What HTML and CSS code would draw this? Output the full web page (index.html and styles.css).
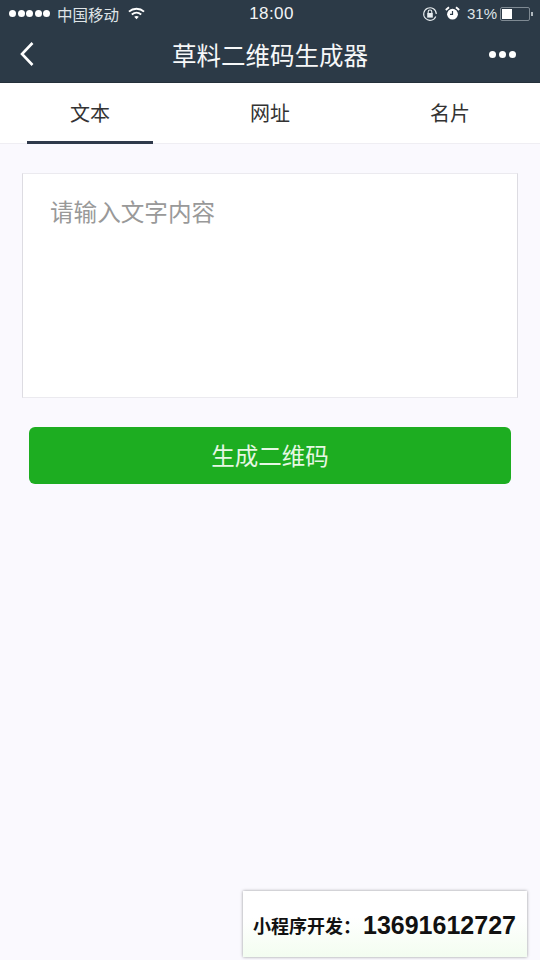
FILE: index.html
```html
<!DOCTYPE html>
<html>
<head>
    <title>草料二维码生成器</title>
    <meta charset="utf-8">
    <link rel="stylesheet" href="styles.css">
</head>
<body>
    <div class="app">
        <div class="top-bar">
            <div class="status-bar">
                <div class="status-left">
                    <span class="signal"><i></i><i></i><i></i><i></i><i></i></span>
                    <span class="carrier">中国移动</span>
                    <svg class="wifi" width="17" height="13" viewBox="0 0 18 13">
                        <path d="M1 4.5 C5.5 0.5 12.5 0.5 17 4.5" fill="none" stroke="#fff" stroke-width="2"/>
                        <path d="M4 7.6 C7 5.2 11 5.2 14 7.6" fill="none" stroke="#fff" stroke-width="2"/>
                        <path d="M6.6 10 C8 9 10 9 11.4 10 L9 12.6 Z" fill="#fff"/>
                    </svg>
                </div>
                <div class="status-time">18:00</div>
                <div class="status-right">
                    <svg class="lock" width="16" height="16" viewBox="0 0 16 16">
                        <path d="M13.8 10.5 A6.3 6.3 0 1 1 14.3 8" fill="none" stroke="#e8edf0" stroke-width="1.1"/>
                        <path d="M5.2 7 h5.6 v4.6 h-5.6 Z" fill="#e8edf0"/>
                        <path d="M6.2 7 V5.8 a1.8 1.8 0 0 1 3.6 0 V7" fill="none" stroke="#e8edf0" stroke-width="1.1"/>
                    </svg>
                    <svg class="alarm" width="15" height="15" viewBox="0 0 15 15">
                        <circle cx="7.5" cy="8.2" r="5.4" fill="#fff"/>
                        <path d="M7.5 5 V8.4 H5" fill="none" stroke="#2b3a48" stroke-width="1.2"/>
                        <path d="M0.8 4 L4 1.2 M14.2 4 L11 1.2" stroke="#fff" stroke-width="1.8"/>
                    </svg>
                    <span class="battery-text">31%</span>
                    <span class="battery"><span class="battery-level"></span></span>
                    <span class="battery-tip"></span>
                </div>
            </div>
            <div class="nav-bar">
                <svg class="back" width="16" height="26" viewBox="0 0 16 26">
                    <path d="M13.5 2 L3 13 L13.5 24" fill="none" stroke="#fff" stroke-width="2.6"/>
                </svg>
                <div class="nav-title">草料二维码生成器</div>
                <div class="more"><i></i><i></i><i></i></div>
            </div>
        </div>
        <div class="tabs">
            <div class="tab active"><span>文本</span></div>
            <div class="tab"><span>网址</span></div>
            <div class="tab"><span>名片</span></div>
        </div>
        <div class="content">
            <div class="text-box">请输入文字内容</div>
            <button class="make-btn">生成二维码</button>
        </div>
    </div>
    <div class="contact">
        <span class="contact-label">小程序开发：</span>
        <span class="contact-phone">13691612727</span>
    </div>
</body>
</html>
```

FILE: styles.css
```css
* {
    box-sizing: border-box;
}

body {
    margin: 0;
    background-color: #faf9fe;
    font-family: "Liberation Sans", "Noto Sans CJK SC", sans-serif;
}

.app {
    width: 540px;
    height: 960px;
    overflow: hidden;
}

.top-bar {
    height: 83px;
    background-color: #2c3a47;
    color: #fff;
    border-bottom: 1px solid #24303a;
}

.status-bar {
    position: relative;
    display: flex;
    justify-content: space-between;
    align-items: center;
    height: 28px;
    padding: 0 7px 1px 9px;
}

.status-left,
.status-right {
    display: flex;
    align-items: center;
}

.signal {
    display: flex;
    gap: 1.5px;
}

.signal i {
    width: 7px;
    height: 7px;
    border-radius: 50%;
    background-color: #fff;
}

.carrier {
    margin-left: 7px;
    font-size: 15.5px;
    color: #dfe4e7;
}

.wifi {
    margin-left: 9px;
}

.status-time {
    position: absolute;
    left: 3px;
    right: 0;
    text-align: center;
    font-size: 17px;
    color: #f2f4f5;
    letter-spacing: 0.4px;
}

.alarm {
    margin-left: 7px;
}

.battery-text {
    margin-left: 7px;
    font-size: 15px;
    color: #dfe4e7;
}

.battery {
    display: block;
    width: 30px;
    height: 14px;
    margin-left: 3px;
    padding: 1px;
    border: 1px solid #7f8a93;
    border-radius: 2px;
}

.battery-level {
    display: block;
    width: 10px;
    height: 100%;
    background-color: #fff;
}

.battery-tip {
    width: 2px;
    height: 4px;
    margin-left: 1px;
    background-color: #b0b8be;
}

.nav-bar {
    display: flex;
    justify-content: space-between;
    align-items: center;
    position: relative;
    height: 54px;
    padding: 0 24px 2px 19px;
}

.nav-title {
    position: absolute;
    left: 0;
    right: 0;
    text-align: center;
    font-size: 24.5px;
    color: #f6f7f8;
}

.more {
    display: flex;
    gap: 3px;
}

.more i {
    width: 7px;
    height: 7px;
    margin: 0;
    border-radius: 50%;
    background-color: #fff;
}

.tabs {
    display: flex;
    height: 61px;
    padding-bottom: 2px;
    background-color: #fff;
    border-bottom: 1px solid #efeef3;
}

.tab {
    display: flex;
    justify-content: center;
    align-items: center;
    position: relative;
    width: 180px;
    font-size: 20px;
    color: #333;
}

.tab.active::after {
    content: "";
    position: absolute;
    left: 27px;
    right: 27px;
    bottom: -3px;
    height: 3px;
    background-color: #2f3a4b;
}

.content {
    padding: 29px 22px 0;
}

.text-box {
    height: 225px;
    padding: 24px 27px;
    background-color: #fff;
    border: 1px solid #dddce2;
    border-top-color: #ebeaef;
    border-bottom-color: #ebeaef;
    font-size: 23.6px;
    line-height: 30px;
    color: #999;
}

.make-btn {
    display: block;
    width: 482px;
    height: 57px;
    margin: 29px 7px 0;
    padding: 0 0 2px;
    border: none;
    border-radius: 6px;
    background-color: #1dad21;
    color: #e6f7e4;
    font-family: inherit;
    font-size: 23.5px;
}

.contact {
    position: absolute;
    left: 243px;
    top: 891px;
    display: flex;
    align-items: center;
    width: 284px;
    height: 66px;
    padding: 2px 0 0 10px;
    background: linear-gradient(#fff 40%, #f3fdf0);
    box-shadow: 0 0 3px rgba(0, 0, 0, 0.4);
    color: #111;
    font-weight: bold;
}

.contact-label {
    width: 110px;
    font-size: 18px;
}

.contact-phone {
    font-size: 25px;
}
```
